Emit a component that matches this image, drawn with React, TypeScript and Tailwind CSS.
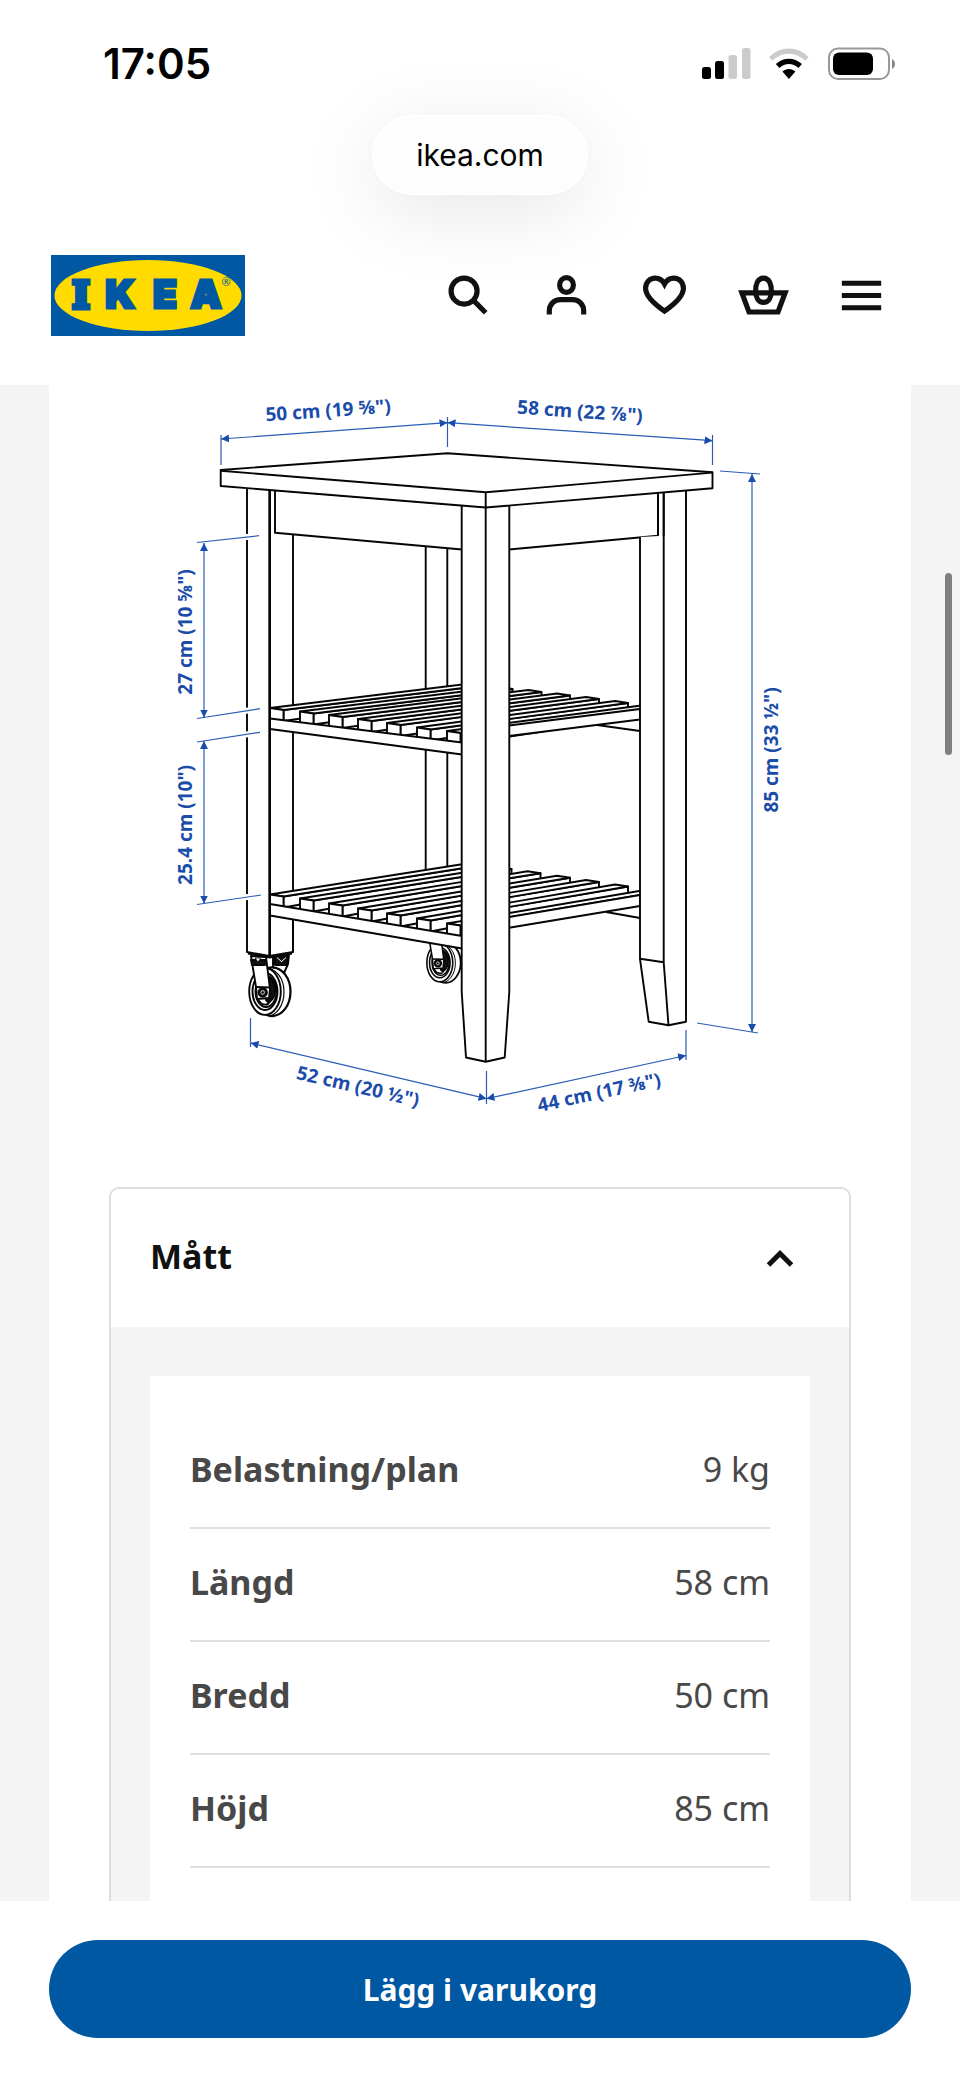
import { useState } from "react";
import type { ReactNode } from "react";

type Point = [number, number];

type Shelf = {
  left: Point[];
  right: Point[];
  rail: string;
  side: string;
  brace: string;
};

const upperShelf: Shelf = {
  left: [[270, 708], [300, 711.5], [329, 715], [358, 719], [387, 723], [417, 727.5], [447, 731]],
  right: [[470.5, 683.5], [499.5, 687], [528.5, 690], [557, 693.5], [586, 697], [615, 701], [645, 705]],
  rail: "270,718.5 462,742.5 462,754.5 270,729",
  side: "509,725.5 640,709 640,719.5 509,736",
  brace: "M597 725 L640 731",
};

const lowerShelf: Shelf = {
  left: [[270, 894.5], [300, 898.5], [329, 903.5], [358, 908.5], [387, 913.5], [417, 918.5], [447, 923.5]],
  right: [[470, 863], [498.5, 867], [527.5, 871.3], [557, 875.7], [586, 880], [615, 884.5], [645, 890]],
  rail: "270,904 462,936 462,948.5 270,915.5",
  side: "509,917 640,895 640,906 509,927.7",
  brace: "M606 912 L640 918",
};

function ShelfDrawing({ shelf }: { shelf: Shelf }) {
  return (
    <g>
      <path d={shelf.brace} />
      {shelf.left.map(([lx, ly], i) => {
        const [rx, ry] = shelf.right[i];
        const fx = lx + 13.5;
        const fy = ly + 2;
        const ex = rx + 13;
        const ey = ry + 2;
        return (
          <g key={lx}>
            <polygon points={`${fx},${fy} ${fx},${fy + 11} ${ex},${ey + 7} ${ex},${ey}`} />
            <polygon points={`${lx},${ly} ${fx},${fy} ${ex},${ey} ${rx},${ry}`} />
            <polygon points={`${lx},${ly} ${fx},${fy} ${fx},${fy + 12} ${lx},${ly + 12}`} />
          </g>
        );
      })}
      <polygon points={shelf.side} />
      <polygon points={shelf.rail} />
    </g>
  );
}

function Caster({ transform }: { transform?: string }) {
  return (
    <g transform={transform}>
      <path d="M273 956 L289 955 L288 964 L284 973 L273 970 Z" />
      <path d="M274 957 H288 L287 965 H275 Z" fill="#111" />
      <path d="M277 957.5 L282 962 M286 957.5 L281 962" stroke="#fff" strokeWidth="1" />
      <ellipse cx="272" cy="991.7" rx="18.5" ry="24.4" strokeWidth="2.2" />
      <ellipse cx="265" cy="991.5" rx="15.8" ry="23.4" />
      <path d="M264 967.6 C276 968 284 978 284 992 C284 1006 276 1015.5 268 1016" fill="none" strokeWidth="1.2" />
      <ellipse cx="265" cy="991.5" rx="12.5" ry="18.5" />
      <ellipse cx="266" cy="991.5" rx="10.5" ry="15.5" />
      <path d="M266 976 C273 978 276 985 275 993 C274 998 271 1001 268 1002 L266 1000 Z" fill="#111" />
      <path d="M257 997 C259 1003 263 1006 268 1004 L272 999" fill="none" />
      <path d="M251 956 L266 957 L270 989 L269 998 L257 999 L256 987 Z" />
      <path d="M251 960 H265 V965 H252 Z" fill="#111" />
      <path d="M255 958 L258 962 L261 958 Z" fill="#fff" strokeWidth="0.8" />
      <path d="M256.5 987 L269.5 987.5" />
      <circle cx="262.7" cy="992.4" r="4.2" fill="#111" />
      <circle cx="262.7" cy="992.4" r="1.8" strokeWidth="0.8" stroke="#fff" fill="none" />
    </g>
  );
}

const labels = [
  { text: '50 cm (19 ⅝")', x: 328, y: 410, angle: -4 },
  { text: '58 cm (22 ⅞")', x: 580, y: 411, angle: 4 },
  { text: '27 cm (10 ⅝")', x: 185, y: 632, angle: -90 },
  { text: '25.4 cm (10")', x: 185, y: 825, angle: -90 },
  { text: '85 cm (33 ½")', x: 771, y: 750, angle: -90 },
  { text: '52 cm (20 ½")', x: 358, y: 1086, angle: 13 },
  { text: '44 cm (17 ⅜")', x: 599, y: 1092, angle: -12 },
];

const extensionLines =
  "M221 435V465 M447.5 417V447 M712.5 435V465 M720 471L760 474 M697 1023L758 1033 M250.5 1018V1047 M486.5 1071V1104 M686 1030V1060";
const leftExtensions = "M197 542.5L259 535.7 M197 718.5L260 708.7 M197 742L260 732.3 M197 904.5L261 895";
const arrows = [
  "M221 439L447.5 422.7",
  "M447.5 422.7L712.5 440.7",
  "M204 543V717.5",
  "M204 741V903.5",
  "M752 474V1032",
  "M250.5 1043L486.5 1098.7",
  "M486.5 1098.7L686 1055.5",
];

function ProductDrawing() {
  return (
    <svg viewBox="109 385 742 742" className="block w-full" role="img" aria-label="Måttritning">
      <defs>
        <marker
          id="arrow"
          viewBox="0 0 8 8"
          refX="8"
          refY="4"
          markerWidth="8"
          markerHeight="8"
          markerUnits="userSpaceOnUse"
          orient="auto-start-reverse"
        >
          <path d="M0 0L8 4L0 8Z" fill="#1a4caa" />
        </marker>
      </defs>

      <g fill="#fff" stroke="#050505" strokeWidth="1.9" strokeLinejoin="round">
        <path d="M425.7 547V690 M447.3 548V688 M425.7 749V871 M447.3 752V867" />
        <path d="M293 534V706 M293 732V892 M293 919V952" />
        <Caster transform="translate(222.5 149.6) scale(.82)" />
        <Caster />
        <ShelfDrawing shelf={upperShelf} />
        <ShelfDrawing shelf={lowerShelf} />
        <path d="M247 487V952L269.5 956L293 952V919 M269.5 490V956" fill="none" />
        <path d="M248 953.5L269.5 957.5L292 953.5" fill="none" strokeWidth="2" />
        <path d="M269.8 490V956" strokeWidth="2.4" />
        <polygon points="275,490 275,532.8 462,549.5 462,505" />
        <polygon points="509,504 509,549.5 658,535.7 658,490" />
        <path d="M640 537V959L648.7 1021.7L668.5 1025.3L686 1021.7V489H663.7V535.7" />
        <path d="M658 490V535.7 M663.7 490V962.3L668.5 1025.3 M640 958.7L663.7 962.3" fill="none" />
        <path d="M461.7 504V991.7L466 1057.5L485.7 1061.7L504.7 1057.5L509.3 991.7V504" />
        <path d="M485.7 504V1061.7" />
        <polygon points="220.7,470 447.5,453.3 712.5,472.3 712.5,488.3 485.7,507.5 220.7,486" />
        <path d="M220.7 470.8L485.7 492.3L712.5 472.6 M485.7 492.3V507.5" fill="none" />
      </g>

      <path d={leftExtensions} stroke="#fff" strokeWidth="6" />
      <g fill="none" stroke="#2a5cb5" strokeWidth="1.2">
        <path d={leftExtensions} />
        <path d={extensionLines} />
        {arrows.map((d) => (
          <path key={d} d={d} markerStart="url(#arrow)" markerEnd="url(#arrow)" />
        ))}
      </g>

      <g className="fill-[#1a4caa] text-[19px] font-bold" textAnchor="middle">
        {labels.map(({ text, x, y, angle }) => (
          <text key={text} transform={`translate(${x} ${y}) rotate(${angle})`} y="7">
            {text}
          </text>
        ))}
      </g>
    </svg>
  );
}

function StatusIcons() {
  return (
    <svg viewBox="700 44 200 40" className="h-10 w-[200px]" role="img" aria-label="Signal, wifi och batteri">
      <rect x="702" y="67" width="9" height="12" rx="2.5" />
      <rect x="715" y="61" width="9" height="18" rx="2.5" />
      <rect x="728.5" y="55" width="8.5" height="24" rx="2.5" fill="#cbcbcb" />
      <rect x="742" y="48" width="8.5" height="31" rx="2.5" fill="#cbcbcb" />
      <g fill="none" strokeWidth="5.2">
        <path d="M770.8 58.8C781.5 48.6 796 48.6 806.9 58.8" stroke="#cbcbcb" />
        <path d="M777.6 66C784.5 59.8 793.2 59.8 800.2 66" stroke="#000" />
      </g>
      <path d="M782.4 71.6C786 68.2 791.8 68.2 795.4 71.6L788.9 79Z" />
      <rect x="829" y="48.5" width="60" height="30.5" rx="9" fill="none" stroke="#999" strokeWidth="2" />
      <rect x="833" y="52.5" width="40" height="22.5" rx="6" />
      <path d="M892 59C896 61 896 67 892 69Z" fill="#888" />
    </svg>
  );
}

function Logo() {
  return (
    <svg viewBox="0 0 194 81" className="h-[81px] w-[194px]" role="img" aria-label="IKEA">
      <rect width="194" height="81" fill="#0058a3" />
      <ellipse cx="97" cy="40.5" rx="93.5" ry="35.5" fill="#ffdb00" />
      <g
        textAnchor="middle"
        fill="#0058a3"
        stroke="#0058a3"
        strokeWidth="3"
        className="font-['Inter',sans-serif] text-[39px] font-black"
      >
        <text x="30" y="53" strokeWidth="5" className="font-['DejaVu_Serif',serif] text-[37px]">
          I
        </text>
        <text x="69" y="53">
          K
        </text>
        <text x="114" y="53">
          E
        </text>
        <text x="155" y="53">
          A
        </text>
      </g>
      <text x="175" y="31" textAnchor="middle" fill="#0058a3" className="text-[11px]">
        ®
      </text>
    </svg>
  );
}

function NavButton({ label, children }: { label: string; children: ReactNode }) {
  return (
    <button type="button" aria-label={label} className="flex items-center justify-center">
      <svg viewBox="0 0 24 24" className="size-[59px]" fill="none" stroke="#111" strokeWidth="2.1">
        {children}
      </svg>
    </button>
  );
}

const measurements = [
  ["Belastning/plan", "9 kg"],
  ["Längd", "58 cm"],
  ["Bredd", "50 cm"],
  ["Höjd", "85 cm"],
];

export default function App() {
  const [open, setOpen] = useState(true);

  return (
    <div className="relative flex h-screen flex-col overflow-hidden bg-[#f4f4f4] font-['Noto_Sans',sans-serif] text-[#111]">
      <header className="shrink-0 overflow-hidden bg-white">
        <div className="flex h-[115px] items-start justify-between pt-11 pr-[60px] pl-[103px]">
          <time className="font-['Inter',sans-serif] text-[42px] leading-10 font-semibold text-black">17:05</time>
          <StatusIcons />
        </div>
        <div className="flex justify-center">
          <div className="flex h-20 items-center rounded-full border-2 border-white bg-[#fdfdfd] px-[42px] font-['Inter',sans-serif] text-[30px] text-black shadow-[0_16px_80px_rgba(0,0,0,0.10)]">
            ikea.com
          </div>
        </div>
        <nav className="relative flex items-center justify-between pt-[60px] pr-[49px] pb-[49px] pl-[51px]">
          <a href="#start" aria-label="IKEA">
            <Logo />
          </a>
          <div className="grid w-[492px] grid-cols-5">
            <NavButton label="Sök">
              <circle cx="10.2" cy="10.2" r="5.3" />
              <path d="M13.9 13.9L19 19" />
            </NavButton>
            <NavButton label="Logga in">
              <ellipse cx="12" cy="7.7" rx="2.8" ry="3" />
              <path d="M5 19.7V18.4C5 15.6 6.9 13.7 9.6 13.7H14.4C17.1 13.7 19 15.6 19 18.4V19.7" />
            </NavButton>
            <NavButton label="Favoriter">
              <path d="M12 18.4C9.4 16.6 4.3 12.9 4.3 9.1C4.3 6.7 6 4.9 8.2 4.9C9.8 4.9 11.2 5.8 12 7.3C12.8 5.8 14.2 4.9 15.8 4.9C18 4.9 19.7 6.7 19.7 9.1C19.7 12.9 14.6 16.6 12 18.4Z" />
            </NavButton>
            <NavButton label="Varukorg">
              <path d="M3.2 10.9H20.8L17.9 18.7H6.1Z" />
              <path d="M12 4.9C9.6 4.9 8.8 7.6 8.8 10.2C8.8 13 10 14.8 12 14.8S15.2 13 15.2 10.2C15.2 7.6 14.4 4.9 12 4.9Z" />
            </NavButton>
            <NavButton label="Meny">
              <path d="M4 7H20M4 12H20M4 17H20" />
            </NavButton>
          </div>
        </nav>
      </header>

      <main className="min-h-0 flex-1 overflow-hidden px-[49px]">
        <div className="bg-white px-[60px]">
          <ProductDrawing />
          <section className="mt-[60px] overflow-hidden rounded-t-[10px] border-2 border-[#dfdfdf]">
            <h2>
              <button
                type="button"
                aria-expanded={open}
                aria-controls="measurements"
                onClick={() => setOpen(!open)}
                className="flex h-[138px] w-full items-center justify-between pr-[53px] pl-[39px] text-[34px] font-bold"
              >
                <span className="pb-1">Mått</span>
                <svg
                  viewBox="0 0 32 24"
                  className={open ? "h-6 w-8" : "h-6 w-8 rotate-180"}
                  fill="none"
                  stroke="#111"
                  strokeWidth="5"
                >
                  <path d="M4.5 19L16 7.5L27.5 19" />
                </svg>
              </button>
            </h2>
            {open && (
              <div id="measurements" className="bg-[#f4f4f4] px-[39px] pt-[49px]">
                <div className="bg-white px-10 pt-[39px] pb-20">
                  <table className="w-full border-collapse text-[34px] text-[#484848]">
                    <tbody>
                      {measurements.map(([name, value]) => (
                        <tr key={name} className="h-[113px] border-b-2 border-[#dfdfdf]">
                          <th scope="row" className="pb-1 text-left font-bold">
                            {name}
                          </th>
                          <td className="pb-1 text-right">{value}</td>
                        </tr>
                      ))}
                    </tbody>
                  </table>
                </div>
              </div>
            )}
          </section>
        </div>
      </main>

      <div className="absolute top-[573px] right-2 h-[182px] w-[7px] rounded-full bg-[#7f7f7f]" />

      <footer className="shrink-0 bg-white px-[49px] pt-[39px] pb-10">
        <button type="button" className="h-[98px] w-full rounded-full bg-[#0058a3] text-[30px] font-bold text-white">
          Lägg i varukorg
        </button>
      </footer>
    </div>
  );
}
